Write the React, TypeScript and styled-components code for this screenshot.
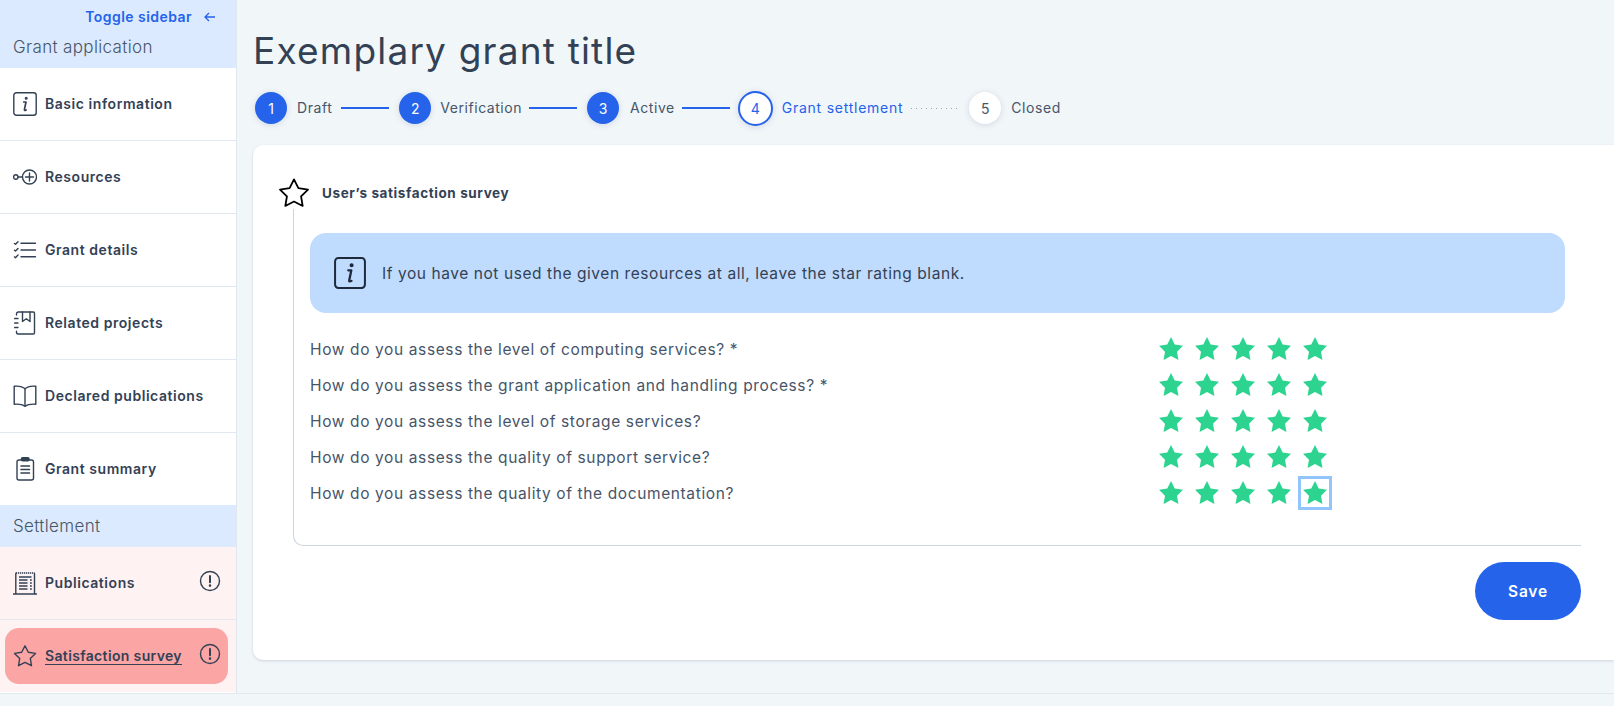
import React from 'react';
import styled, { createGlobalStyle } from 'styled-components';

const GlobalStyle = createGlobalStyle`
    html, body {
        margin: 0;
        padding: 0;
        height: 706px;
        overflow: hidden;
        background: #f1f6f9;
        font-family: Inter, "Open Sans", sans-serif;
        color: #334155;
    }
`;

const Shell = styled.div`
    display: flex;
    width: 1614px;
    height: 694px;
    border-bottom: 1px solid #e2e8f0;
    box-sizing: border-box;
`;

const Sidebar = styled.aside`
    width: 237px;
    flex: none;
    box-sizing: border-box;
    background: #fff;
    border-right: 1px solid #e2e8f0;
    display: flex;
    flex-direction: column;
`;

const SectionHead = styled.div<{ $tall?: boolean }>`
    background: #dbeafe;
    height: ${({ $tall }) => ($tall ? 68 : 42)}px;
    box-sizing: border-box;
    padding: 0 13px;
    display: flex;
    flex-direction: column;
    justify-content: ${({ $tall }) => ($tall ? 'flex-end' : 'center')};
    padding-bottom: ${({ $tall }) => ($tall ? 11 : 0)}px;
    font-size: 17px;
    font-weight: 300;
    color: #475569;
    letter-spacing: 0.35px;
`;

const ToggleButton = styled.button`
    border: 0;
    background: none;
    padding: 0;
    margin: 0 7px 12px 0;
    align-self: flex-end;
    display: flex;
    align-items: center;
    gap: 12px;
    color: #2563eb;
    font: 600 14px Inter, sans-serif;
    letter-spacing: 0.45px;
`;

const NavRow = styled.div<{ $alert?: boolean }>`
    height: 73px;
    box-sizing: border-box;
    flex: none;
    padding: 0 14px 0 13px;
    display: flex;
    align-items: center;
    gap: 8px;
    background: ${({ $alert }) => ($alert ? '#fef2f2' : '#fff')};
    border-bottom: 1px solid #e2e8f0;
    font-size: 14px;
    font-weight: 600;
    letter-spacing: 0.55px;
`;

const NavRowLast = styled(NavRow)`
    height: 72px;
    border-bottom: 0;
`;

const ActiveRow = styled.div`
    height: 72px;
    box-sizing: border-box;
    padding: 8px 8px 8px 5px;
    background: #fef2f2;
    display: flex;
`;

const ActivePill = styled.div`
    flex: 1;
    background: #fca5a5;
    border-radius: 14px;
    padding: 0 6px 0 8px;
    display: flex;
    align-items: center;
    gap: 8px;
    font-size: 14px;
    font-weight: 600;
    letter-spacing: 0.35px;
`;

const NavLabel = styled.span<{ $underlined?: boolean }>`
    flex: 1;
    margin-top: -2px;
    text-decoration: ${({ $underlined }) => ($underlined ? 'underline' : 'none')};
    text-underline-offset: 3px;
`;

const NavIcon = styled.svg`
    width: 24px;
    height: 24px;
    flex: none;
    fill: none;
    stroke: #334155;
    stroke-width: 1.4;
    stroke-linecap: round;
    stroke-linejoin: round;
`;

const AlertIcon = styled(NavIcon)`
    margin: -4px 0 0;
`;

const Main = styled.main`
    flex: 1;
    min-width: 0;
    padding: 27px 0 0 16px;
    display: flex;
    flex-direction: column;
`;

const Title = styled.h1`
    margin: 0;
    font-size: 37px;
    line-height: 48px;
    font-weight: 400;
    letter-spacing: 1.2px;
    color: #334155;
`;

const Stepper = styled.ol`
    list-style: none;
    margin: 17px 0 0 2px;
    padding: 0;
    display: flex;
    align-items: center;
    height: 32px;
`;

const StepItem = styled.li`
    display: flex;
    align-items: center;
`;

const StepCircle = styled.span<{ $state: 'done' | 'current' | 'todo' }>`
    flex: none;
    box-sizing: border-box;
    border-radius: 50%;
    display: flex;
    align-items: center;
    justify-content: center;
    font-size: 14px;
    width: ${({ $state }) => ($state === 'current' ? 35 : 32)}px;
    height: ${({ $state }) => ($state === 'current' ? 35 : 32)}px;
    background: ${({ $state }) => ($state === 'done' ? '#2563eb' : '#fff')};
    color: ${({ $state }) => ($state === 'done' ? '#fff' : $state === 'current' ? '#2563eb' : '#475569')};
    border: ${({ $state }) => ($state === 'current' ? '2px solid #2563eb' : '0')};
    box-shadow: 0 1px 6px rgba(100, 116, 139, 0.22);
`;

const StepLabel = styled.span<{ $current?: boolean; $gap: number }>`
    margin: -2px 0 0 ${({ $gap }) => $gap}px;
    font-size: 14px;
    letter-spacing: ${({ $current }) => ($current ? 0.75 : 0.55)}px;
    color: ${({ $current }) => ($current ? '#2563eb' : '#475569')};
`;

const StepLine = styled.span<{ $left: number; $right: number }>`
    width: 48px;
    height: 2px;
    flex: none;
    margin: 0 ${({ $right }) => $right}px 0 ${({ $left }) => $left}px;
    background: #2563eb;
`;

const StepDots = styled(StepLine)`
    height: 1px;
    background: repeating-linear-gradient(90deg, #94a3b8 0 1px, transparent 1px 5px);
`;

const Card = styled.section`
    margin-top: 21px;
    height: 515px;
    box-sizing: border-box;
    background: #fff;
    border-radius: 10px 0 0 10px;
    box-shadow: 0 1px 3px rgba(100, 116, 139, 0.25);
    padding: 32px 33px 40px 25px;
`;

const SurveyHead = styled.div`
    display: flex;
    align-items: center;
    gap: 12px;
    font-size: 13.5px;
    font-weight: 700;
    letter-spacing: 0.6px;
`;

const Timeline = styled.div`
    margin-left: 15px;
    box-sizing: border-box;
    height: 337px;
    padding: 24px 16px 0 16px;
    border-left: 1px solid #cbd5e1;
    border-bottom: 1px solid #cbd5e1;
    border-bottom-left-radius: 10px;
`;

const InfoBox = styled.div`
    height: 80px;
    box-sizing: border-box;
    background: #bfdbfe;
    border-radius: 16px;
    padding: 0 24px;
    display: flex;
    align-items: center;
    gap: 16px;
    font-size: 15.5px;
    letter-spacing: 0.57px;
    margin-bottom: 18px;
`;

const QuestionRow = styled.div`
    display: grid;
    grid-template-columns: 843px auto;
    align-items: center;
    height: 36px;
    font-size: 15.5px;
    letter-spacing: 0.62px;
    color: #475569;
`;

const Stars = styled.div`
    display: flex;
`;

const StarCell = styled.span<{ $focused?: boolean }>`
    width: 36px;
    height: 36px;
    box-sizing: border-box;
    padding-bottom: 2px;
    display: flex;
    align-items: center;
    justify-content: center;
    outline: ${({ $focused }) => ($focused ? '3px solid #93c5fd' : 'none')};
    outline-offset: -4px;
`;

const StarIcon = styled.svg`
    width: 24px;
    height: 23px;
    fill: #2dd490;
`;

const Actions = styled.div`
    display: flex;
    justify-content: flex-end;
    margin-top: 16px;
`;

const SaveButton = styled.button`
    width: 106px;
    height: 58px;
    border: 0;
    border-radius: 29px;
    background: #2563eb;
    color: #fff;
    font: 600 15.5px Inter, sans-serif;
    letter-spacing: 0.8px;
`;

const STAR_OUTLINE = 'M12 1.8l3.300 6.500 7.200 1.100-5.200 5.100 1.200 7.200-6.500-3.300-6.500 3.300 1.200-7.200-5.200-5.100 7.200-1.100z';

const InfoGlyph = () => (
    <>
        <rect x="0.8" y="0.8" width="22.400" height="22.400" rx="2.500" />
        <path d="M10.700 10h2.300l-1.600 7.700c-.1.700.5.900 1.700.2" strokeWidth="1.700" />
        <circle cx="13.200" cy="6.200" r="0.800" fill="#334155" />
    </>
);

const AlertGlyph = () => (
    <>
        <circle cx="12" cy="12" r="9.500" />
        <path d="M12 7v6.200" strokeWidth="2" />
        <circle cx="12" cy="16.600" r="0.600" fill="#334155" />
    </>
);

const ICONS: Record<string, React.ReactNode> = {
    info: <InfoGlyph />,
    resources: (
        <>
            <circle cx="2.800" cy="12" r="2.200" />
            <path d="M5 12h4" />
            <circle cx="16.500" cy="12" r="7" />
            <path d="M16.500 8v8M12.500 12h8" />
        </>
    ),
    details: (
        <path d="M8 5.300h14.500M8 12h14.500M8 18.700h14.500M1.500 5.500l1 .8 2.500-2.600M1.500 12.200l1 .8 2.500-2.600M1.500 18.900l1 .8 2.500-2.600" />
    ),
    projects: (
        <>
            <path d="M3.500 4V2.800A1.800 1.800 0 0 1 5.300 1h15a1.200 1.200 0 0 1 1.200 1.200v19.600a1.200 1.200 0 0 1-1.200 1.200h-15a1.800 1.800 0 0 1-1.800-1.800v-1" />
            <path d="M9.500 1v9.500l3.800-2.700 3.700 2.700V1" />
            <path d="M1.800 7.500h3M1.800 12h3M1.800 16.500h3" strokeWidth="1.700" />
        </>
    ),
    book: (
        <>
            <path d="M12 4.800C9.500 2.300 5.500 1.800 1.200 2.200v18c4.300-.3 8.300.2 10.800 2 2.500-1.800 6.500-2.300 10.800-2v-18C18.500 1.800 14.500 2.300 12 4.800z" />
            <path d="M12 4.800v17.400" />
        </>
    ),
    clipboard: (
        <>
            <rect x="4" y="3" width="16.500" height="20" rx="2" />
            <rect x="8.500" y="0.800" width="7.500" height="3" rx="1" fill="#334155" />
            <path d="M8 9h8.500M8 12.500h8.500M8 16h8.500" strokeWidth="1.600" />
        </>
    ),
    newspaper: (
        <>
            <path d="M2.800 22.500V2.500M21.500 22.500V2.500" />
            <path d="M2.800 2h18.700" strokeDasharray="1 1" strokeLinecap="butt" strokeWidth="2" />
            <path d="M0.500 23h23.200" strokeWidth="1.600" />
            <path d="M6 6h12.500M6 9h8.500M17 9h1.800M6 12h8.500M17 12h1.800M6 15h8.500M17 15h1.800M6 18h8.500M17 18h1.800" strokeWidth="1.500" strokeLinecap="butt" />
        </>
    ),
    star: <path d={STAR_OUTLINE} />,
};

const NAV_ITEMS = [
    { icon: 'info', label: 'Basic information' },
    { icon: 'resources', label: 'Resources' },
    { icon: 'details', label: 'Grant details' },
    { icon: 'projects', label: 'Related projects' },
    { icon: 'book', label: 'Declared publications' },
];

const QUESTIONS = [
    'How do you assess the level of computing services? *',
    'How do you assess the grant application and handling process? *',
    'How do you assess the level of storage services?',
    'How do you assess the quality of support service?',
    'How do you assess the quality of the documentation?',
];

function RatingStars({ focused }: { focused?: number }) {
    return (
        <Stars>
            {[0, 1, 2, 3, 4].map((i) => (
                <StarCell key={i} $focused={focused === i}>
                    <StarIcon viewBox="0.6 0.6 22.8 21.7">
                        <path d="M12 .6l3.530 7.150 7.870 1.150-5.690 5.550 1.340 7.850L12 18.600l-7.050 3.700 1.340-7.850L.6 8.900l7.870-1.150z" />
                    </StarIcon>
                </StarCell>
            ))}
        </Stars>
    );
}

export default function App() {
    return (
        <>
            <GlobalStyle />
            <Shell>
                <Sidebar>
                    <SectionHead $tall>
                        <ToggleButton>
                            Toggle sidebar
                            <svg width="12" height="10" viewBox="0 0 12 10" fill="none" stroke="#2563eb" strokeWidth="1.3">
                                <path d="M11 5H1M5 1L1 5l4 4" />
                            </svg>
                        </ToggleButton>
                        Grant application
                    </SectionHead>
                    {NAV_ITEMS.map((item) => (
                        <NavRow key={item.label}>
                            <NavIcon viewBox="0 0 24 24">{ICONS[item.icon]}</NavIcon>
                            <NavLabel>{item.label}</NavLabel>
                        </NavRow>
                    ))}
                    <NavRowLast>
                        <NavIcon viewBox="0 0 24 24">{ICONS.clipboard}</NavIcon>
                        <NavLabel>Grant summary</NavLabel>
                    </NavRowLast>
                    <SectionHead>Settlement</SectionHead>
                    <NavRow $alert>
                        <NavIcon viewBox="0 0 24 24">{ICONS.newspaper}</NavIcon>
                        <NavLabel>Publications</NavLabel>
                        <AlertIcon viewBox="0 0 24 24"><AlertGlyph /></AlertIcon>
                    </NavRow>
                    <ActiveRow>
                        <ActivePill>
                            <NavIcon viewBox="0 0 24 24">{ICONS.star}</NavIcon>
                            <NavLabel $underlined>Satisfaction survey</NavLabel>
                            <AlertIcon viewBox="0 0 24 24"><AlertGlyph /></AlertIcon>
                        </ActivePill>
                    </ActiveRow>
                </Sidebar>
                <Main>
                    <Title>Exemplary grant title</Title>
                    <Stepper>
                        <StepItem>
                            <StepCircle $state="done">1</StepCircle>
                            <StepLabel $gap={10}>Draft</StepLabel>
                            <StepLine $left={9} $right={10} />
                        </StepItem>
                        <StepItem>
                            <StepCircle $state="done">2</StepCircle>
                            <StepLabel $gap={9}>Verification</StepLabel>
                            <StepLine $left={7} $right={10} />
                        </StepItem>
                        <StepItem>
                            <StepCircle $state="done">3</StepCircle>
                            <StepLabel $gap={11}>Active</StepLabel>
                            <StepLine $left={7} $right={8} />
                        </StepItem>
                        <StepItem>
                            <StepCircle $state="current">4</StepCircle>
                            <StepLabel $current $gap={9}>Grant settlement</StepLabel>
                            <StepDots $left={8} $right={10} />
                        </StepItem>
                        <StepItem>
                            <StepCircle $state="todo">5</StepCircle>
                            <StepLabel $gap={10}>Closed</StepLabel>
                        </StepItem>
                    </Stepper>
                    <Card>
                        <SurveyHead>
                            <svg width="32" height="32" viewBox="0 0 24 24" fill="none" stroke="#000" strokeWidth="1.35" strokeLinejoin="round">
                                <path d={STAR_OUTLINE} />
                            </svg>
                            User’s satisfaction survey
                        </SurveyHead>
                        <Timeline>
                            <InfoBox>
                                <svg width="32" height="32" viewBox="0 0 24 24" fill="none" stroke="#1e293b" strokeWidth="1.5" strokeLinecap="round" strokeLinejoin="round">
                                    <InfoGlyph />
                                </svg>
                                If you have not used the given resources at all, leave the star rating blank.
                            </InfoBox>
                            {QUESTIONS.map((question, i) => (
                                <QuestionRow key={question}>
                                    {question}
                                    <RatingStars focused={i === 4 ? 4 : undefined} />
                                </QuestionRow>
                            ))}
                        </Timeline>
                        <Actions>
                            <SaveButton>Save</SaveButton>
                        </Actions>
                    </Card>
                </Main>
            </Shell>
        </>
    );
}
